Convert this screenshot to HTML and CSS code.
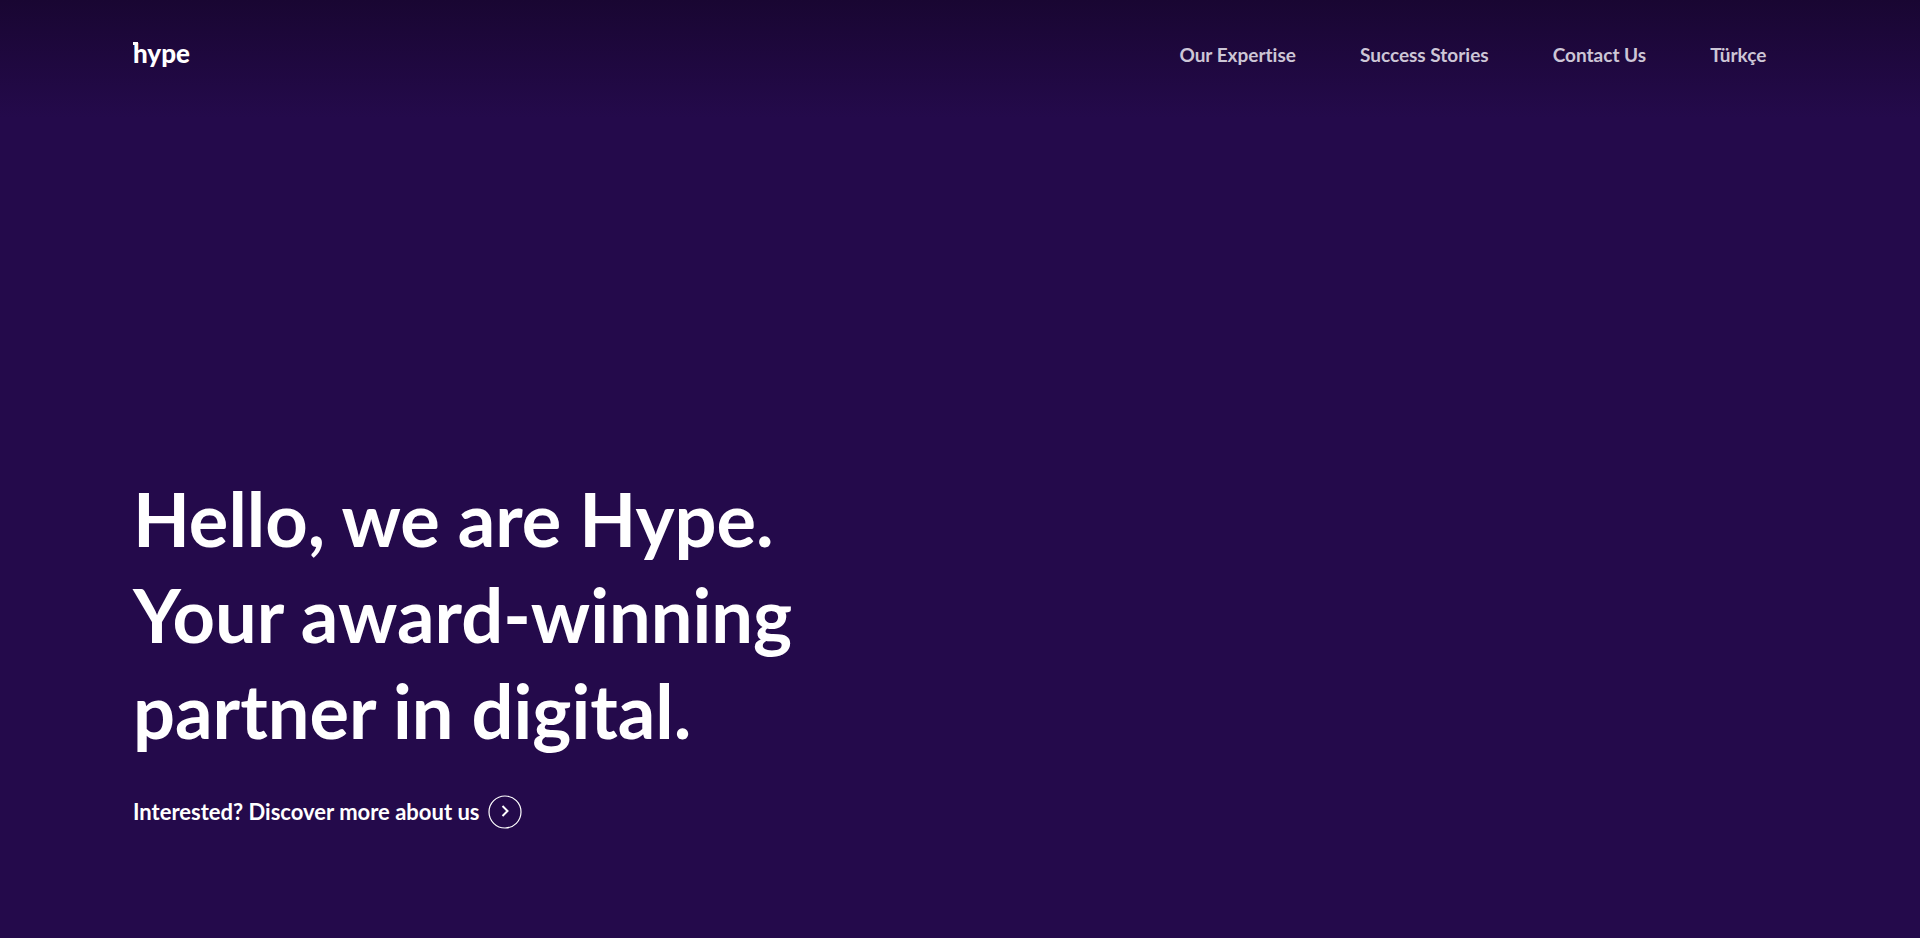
FILE: index.html
```html
<!DOCTYPE html>
<html lang="en">
<head>
<meta charset="utf-8">
<meta name="viewport" content="width=device-width, initial-scale=1">
<title>Hype</title>
<link rel="stylesheet" href="styles.css">
</head>
<body>
<div class="page">
  <header class="header">
    <a class="logo" href="#" aria-label="Hype home">
      <svg width="60" height="34" viewBox="0 0 60 34">
        <rect x="0" y="4" width="5" height="3" fill="currentColor"/>
        <text class="logo-text" x="0" y="25">hype</text>
      </svg>
    </a>
    <nav class="nav">
      <a href="#">Our Expertise</a>
      <a href="#">Success Stories</a>
      <a href="#">Contact Us</a>
      <a href="#" lang="tr">Türkçe</a>
    </nav>
  </header>
  <main class="hero">
    <h1 class="title">Hello, we are Hype.<br>Your award-winning<br>partner in digital.</h1>
    <a class="more" href="#">
      <span>Interested? Discover more about us</span>
      <svg class="more-icon" width="34" height="34" viewBox="0 0 34 34" fill="none" stroke="currentColor">
        <circle cx="17" cy="17" r="16" stroke-width="1.200"/>
        <path d="M14.500 11l5 5-5 5" stroke-width="2"/>
      </svg>
    </a>
  </main>
</div>
</body>
</html>
```
FILE: styles.css
```css
* {
  box-sizing: border-box;
}

body {
  margin: 0;
  background: #240a4b;
  color: #fff;
  font-family: Lato, "Open Sans", sans-serif;
  font-weight: 700;
  font-variant-ligatures: no-common-ligatures;
}

a {
  color: inherit;
  text-decoration: none;
}

.page {
  min-height: 100vh;
  display: flex;
  flex-direction: column;
}

.header {
  display: flex;
  align-items: center;
  justify-content: space-between;
  padding: 36px 8vw 44px 133px;
  background: linear-gradient(#190632, #240a4b);
}

.logo {
  display: block;
  height: 38px;
  padding-top: 2px;
}

.logo svg {
  display: block;
  overflow: visible;
}

.logo-text {
  font-size: 26px;
  font-weight: 900;
  fill: currentColor;
}

.nav {
  display: flex;
  gap: 64px;
  font-size: 19px;
  line-height: 24px;
  color: #cdc6d6;
}

.hero {
  margin-top: auto;
  padding: 0 133px 109px;
}

.title {
  margin: 0 0 36px;
  font-size: 74px;
  line-height: 96px;
}

.more {
  display: inline-flex;
  align-items: center;
  gap: 8px;
  font-size: 22px;
  line-height: 30px;
}

.more-icon {
  display: block;
}
```
